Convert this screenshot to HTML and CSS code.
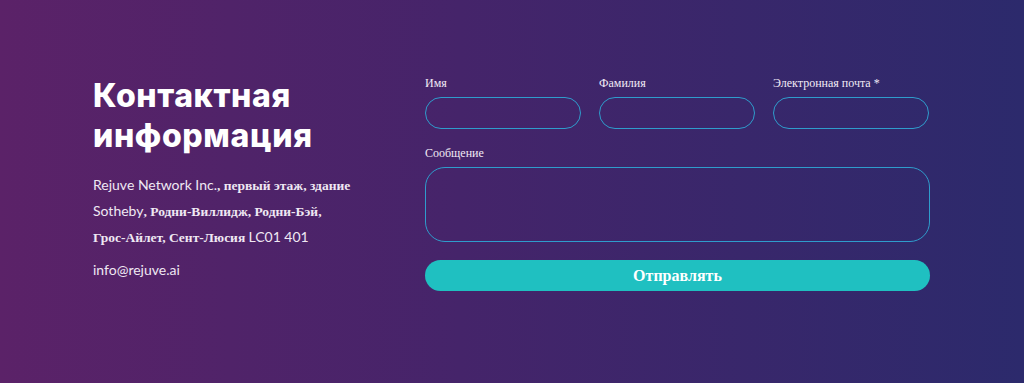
FILE: index.html
```html
<!DOCTYPE html>
<html lang="ru">
<head>
    <meta charset="UTF-8">
    <meta name="viewport" content="width=device-width, initial-scale=1.0">
    <title>Контактная информация</title>
    <link rel="stylesheet" href="styles.css">
</head>
<body>
    <section class="contact">
        <div class="info">
            <h2>Контактная информация</h2>
            <p class="address">
                <span class="lat">Rejuve Network Inc.</span><span class="cyr">, первый этаж, здание</span><br>
                <span class="lat">Sotheby</span><span class="cyr">, Родни-Виллидж, Родни-Бэй,</span><br>
                <span class="cyr">Грос-Айлет, Сент-Люсия</span> <span class="lat">LC01 401</span>
            </p>
            <p class="email"><span class="lat">info@rejuve.ai</span></p>
        </div>
        <form class="form">
            <div class="row">
                <label class="field">
                    <span>Имя</span>
                    <input type="text">
                </label>
                <label class="field">
                    <span>Фамилия</span>
                    <input type="text">
                </label>
                <label class="field">
                    <span>Электронная почта *</span>
                    <input type="email">
                </label>
            </div>
            <label class="field">
                <span>Сообщение</span>
                <textarea></textarea>
            </label>
            <button type="button">Отправлять</button>
        </form>
    </section>
</body>
</html>
```

FILE: styles.css
```css
body {
    margin: 0;
    height: 383px;
    overflow: hidden;
    background: linear-gradient(90deg, #5b2268 0%, #45246a 45%, #2c2a6c 100%);
    color: #fff;
}

.contact {
    display: flex;
    padding: 76px 0 0 93px;
}

.info {
    width: 332px;
}

.info h2 {
    margin: 0;
    font-family: 'Inter', 'Noto Sans', sans-serif;
    font-weight: 800;
    font-size: 32px;
    line-height: 40px;
    letter-spacing: 0.6px;
    width: 260px;
}

.info .address {
    margin: 16px 0 0;
    font-size: 13px;
    line-height: 25px;
    color: #efe8f3;
    white-space: nowrap;
}

.lat {
    font-family: 'Lato', sans-serif;
    font-weight: 400;
    font-size: 14px;
}

.cyr {
    font-family: 'Liberation Serif', serif;
    font-weight: bold;
    font-size: 13.5px;
}

.info .email {
    margin: 10px 0 0;
    line-height: 20px;
    color: #efe8f3;
}

.form {
    width: 505px;
    display: flex;
    flex-direction: column;
}

.row {
    display: flex;
    gap: 18px;
    margin-bottom: 17px;
}

.row .field {
    width: 156px;
}

.field {
    display: flex;
    flex-direction: column;
}

.field span {
    font-family: 'Liberation Serif', serif;
    font-size: 12px;
    line-height: 14px;
    margin-bottom: 7px;
    color: #f1eaf5;
}

.field input,
.field textarea {
    box-sizing: border-box;
    background: transparent;
    border: 1px solid #2f9ccc;
    border-radius: 16px;
    outline: none;
}

.field input {
    height: 32px;
}

.field textarea {
    height: 75px;
    border-radius: 20px;
    resize: none;
}

.form button {
    margin-top: 18px;
    height: 31px;
    border: none;
    border-radius: 16px;
    background-color: #1fc0c1;
    color: #fff;
    font-family: 'Liberation Serif', serif;
    font-weight: bold;
    font-size: 16px;
    cursor: pointer;
}
```
